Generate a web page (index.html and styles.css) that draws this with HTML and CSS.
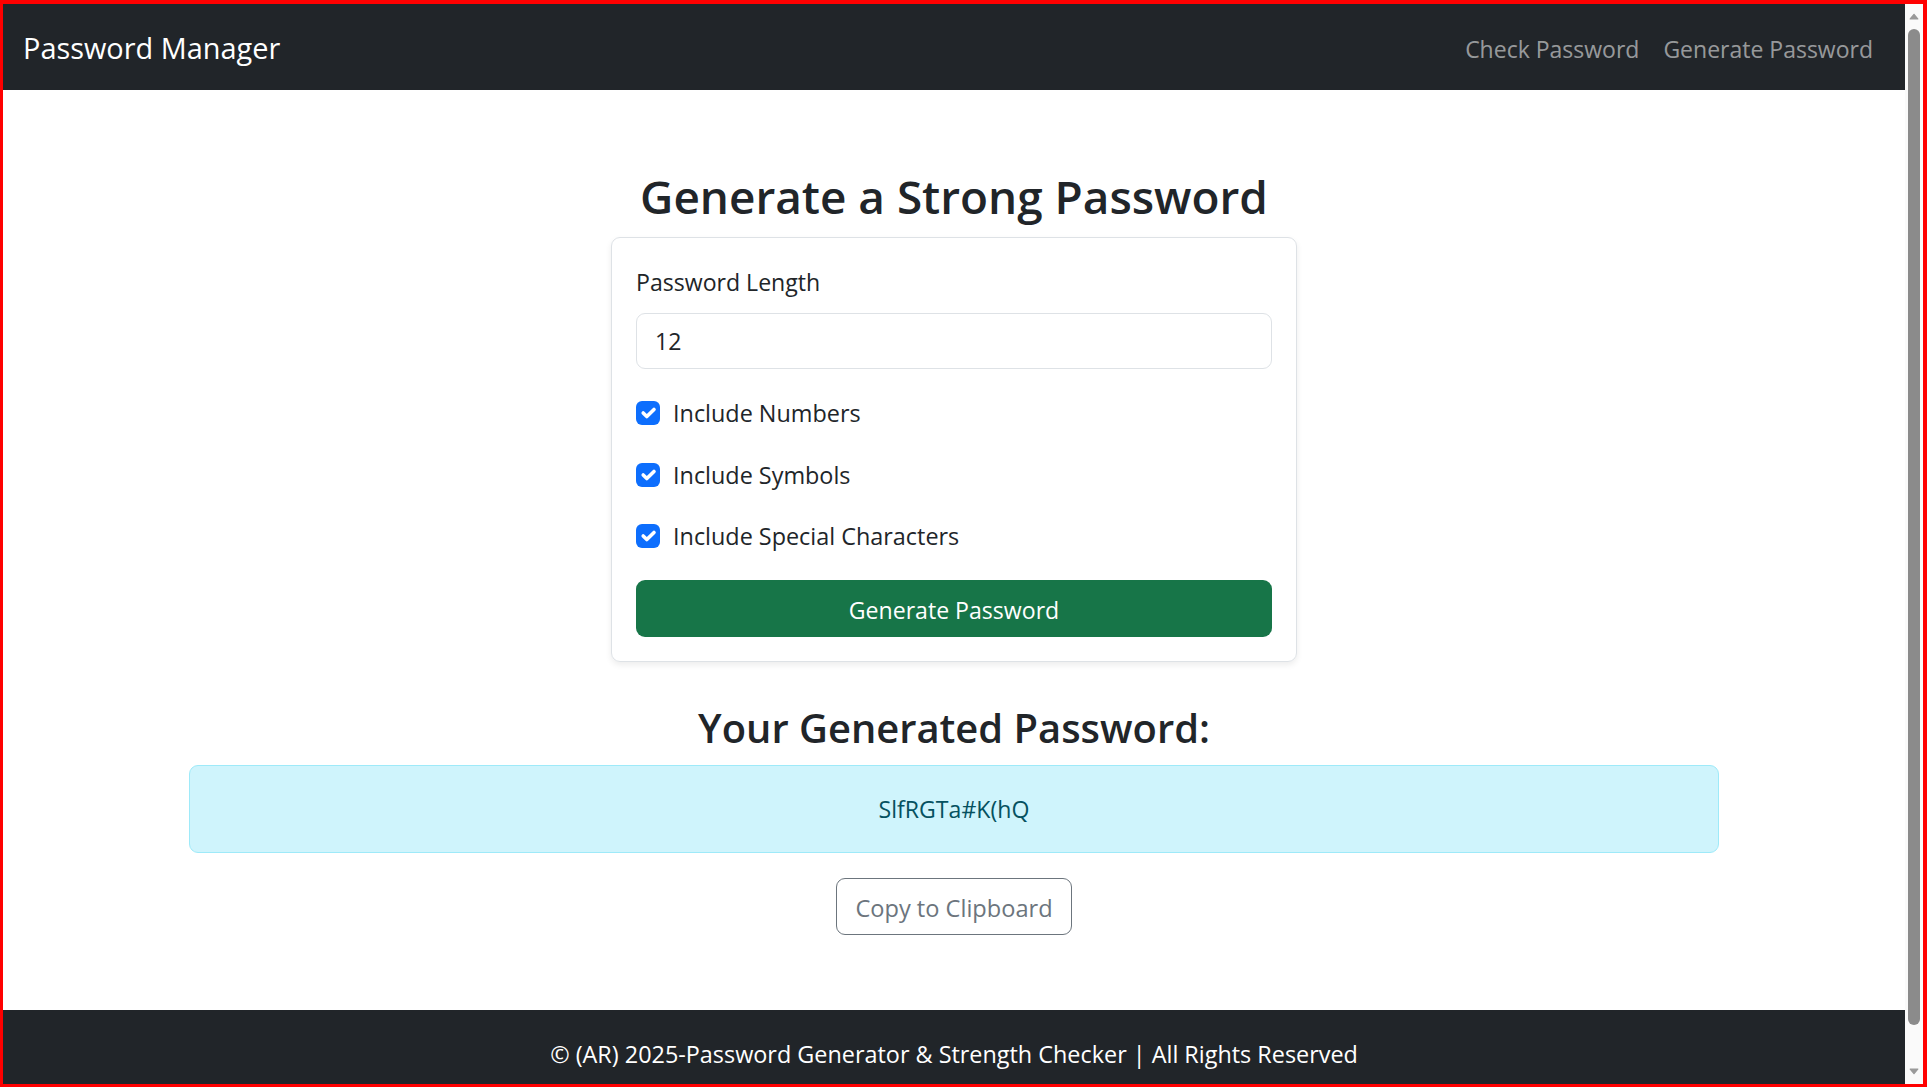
FILE: index.html
```html
<!DOCTYPE html>
<html lang="en">
<head>
<meta charset="utf-8">
<title>Password Manager</title>
<link rel="stylesheet" href="styles.css">
</head>
<body>
<div class="frame">
  <div class="viewport">
    <nav class="navbar">
      <a class="brand" href="#">Password Manager</a>
      <ul class="nav-links">
        <li><a class="nav-link" href="#">Check Password</a></li>
        <li><a class="nav-link" href="#">Generate Password</a></li>
      </ul>
    </nav>

    <main class="main">
      <h2 class="title">Generate a Strong Password</h2>
      <form class="card">
        <label class="field-label" for="length">Password Length</label>
        <input class="field-input" id="length" type="text" value="12">
        <div class="check-row">
          <span class="checkbox"><svg viewBox="0 0 20 20" width="24" height="24"><path d="m6 10 3 3 6-6" fill="none" stroke="#fff" stroke-width="3" stroke-linecap="round" stroke-linejoin="round"/></svg></span>
          <span class="check-label">Include Numbers</span>
        </div>
        <div class="check-row">
          <span class="checkbox"><svg viewBox="0 0 20 20" width="24" height="24"><path d="m6 10 3 3 6-6" fill="none" stroke="#fff" stroke-width="3" stroke-linecap="round" stroke-linejoin="round"/></svg></span>
          <span class="check-label">Include Symbols</span>
        </div>
        <div class="check-row">
          <span class="checkbox"><svg viewBox="0 0 20 20" width="24" height="24"><path d="m6 10 3 3 6-6" fill="none" stroke="#fff" stroke-width="3" stroke-linecap="round" stroke-linejoin="round"/></svg></span>
          <span class="check-label">Include Special Characters</span>
        </div>
        <button class="btn-generate" type="button">Generate Password</button>
      </form>

      <h3 class="subtitle">Your Generated Password:</h3>
      <div class="result">SlfRGTa#K(hQ</div>
      <button class="btn-copy" type="button">Copy to Clipboard</button>
    </main>

    <footer class="footer">© (AR) 2025-Password Generator &amp; Strength Checker | All Rights Reserved</footer>
  </div>

  <div class="scrollbar">
    <div class="sb-btn"><svg viewBox="0 0 10 7" width="10" height="7"><path d="M1.2 6 5 1.3 8.8 6Z" fill="#9a9a9a" stroke="#9a9a9a" stroke-width="1.2" stroke-linejoin="round"/></svg></div>
    <div class="sb-track"><div class="sb-thumb"></div></div>
    <div class="sb-btn"><svg viewBox="0 0 10 7" width="10" height="7"><path d="M1.2 1 5 5.7 8.8 1Z" fill="#9a9a9a" stroke="#9a9a9a" stroke-width="1.2" stroke-linejoin="round"/></svg></div>
  </div>
</div>
</body>
</html>
```
FILE: styles.css
```css
* { box-sizing: border-box; }

html, body {
  margin: 0;
  padding: 0;
  height: 100%;
  overflow: hidden;
}

body {
  font-family: "Open Sans", "Noto Sans", sans-serif;
  font-size: 23.1px;
  line-height: 36px;
  color: #212529;
  background: #fff;
}

.frame {
  height: 100vh;
  display: flex;
  border-style: solid;
  border-color: #ff0000;
  border-width: 4px 4px 3px 3px;
}

.viewport {
  flex: 1;
  min-width: 0;
  display: flex;
  flex-direction: column;
  overflow: hidden;
}

/* navbar */
.navbar {
  flex: none;
  height: 86px;
  background: #212529;
  display: flex;
  align-items: center;
  justify-content: space-between;
  padding: 0 20px 0 20px;
}

.brand {
  color: #fff;
  text-decoration: none;
  font-size: 28.9px;
  line-height: 43px;
}

.nav-links {
  list-style: none;
  margin: 0;
  padding: 0;
  display: flex;
}

.nav-link {
  display: block;
  padding: 3px 12px 0;
  font-size: 23px;
  line-height: 36px;
  color: rgba(255, 255, 255, 0.55);
  text-decoration: none;
}

/* main */
.main {
  flex: none;
  display: flex;
  flex-direction: column;
  align-items: center;
  padding: 79px 0 75px;
}

.title {
  margin: 0 0 13px;
  font-size: 45.9px;
  line-height: 55px;
  font-weight: 600;
  color: #212529;
}

.card {
  width: 686px;
  margin: 0;
  border: 1px solid #dee2e6;
  border-radius: 9px;
  padding: 26px 24px 24px;
  box-shadow: 0 3px 6px rgba(0, 0, 0, 0.075);
  display: flex;
  flex-direction: column;
}

.field-label {
  display: block;
  margin-bottom: 13px;
}

.field-input {
  display: block;
  width: 100%;
  height: 56px;
  margin: 0 0 26px;
  padding: 0 18px;
  border: 1px solid #dee2e6;
  border-radius: 9px;
  font: inherit;
  color: #212529;
  background: #fff;
  outline: none;
}

.check-row {
  display: flex;
  align-items: flex-start;
  height: 36px;
  margin-bottom: 25.5px;
}

.checkbox {
  flex: none;
  width: 24px;
  height: 24px;
  margin: 6px 13px 0 0;
  border-radius: 6px;
  background: #0d6efd;
  display: flex;
}

.check-label {
  font-size: 23.4px;
}

.btn-generate {
  display: block;
  width: 100%;
  height: 57px;
  padding: 3px 18px 0;
  border: none;
  border-radius: 9px;
  background: #177548;
  color: #fff;
  font: inherit;
  line-height: 36px;
}

.subtitle {
  margin: 42px 0 13px;
  font-size: 39.9px;
  line-height: 48px;
  font-weight: 600;
  color: #212529;
}

.result {
  width: 100%;
  max-width: 1530px;
  padding: 25px 24px;
  border: 1px solid #9eeaf9;
  border-radius: 9px;
  background: #cff4fc;
  color: #055160;
  text-align: center;
  margin-bottom: 25px;
}

.btn-copy {
  height: 57px;
  padding: 3px 18px 0;
  border: 1px solid #6c757d;
  border-radius: 9px;
  background: transparent;
  color: #6c757d;
  font-family: inherit;
  font-size: 23.6px;
  line-height: 36px;
}

.footer {
  flex: none;
  background: #212529;
  color: #fff;
  text-align: center;
  padding: 26px 0 24px;
  font-size: 23.4px;
  line-height: 36px;
}

/* scrollbar */
.scrollbar {
  flex: none;
  width: 18px;
  display: flex;
  flex-direction: column;
  background: #fafafa;
}

.sb-btn {
  flex: none;
  height: 25px;
  display: flex;
  align-items: center;
  justify-content: center;
}

.sb-track {
  flex: 1;
  padding: 0 3px;
}

.sb-thumb {
  height: 996px;
  border-radius: 6px;
  background: #8b8b8b;
}
```
